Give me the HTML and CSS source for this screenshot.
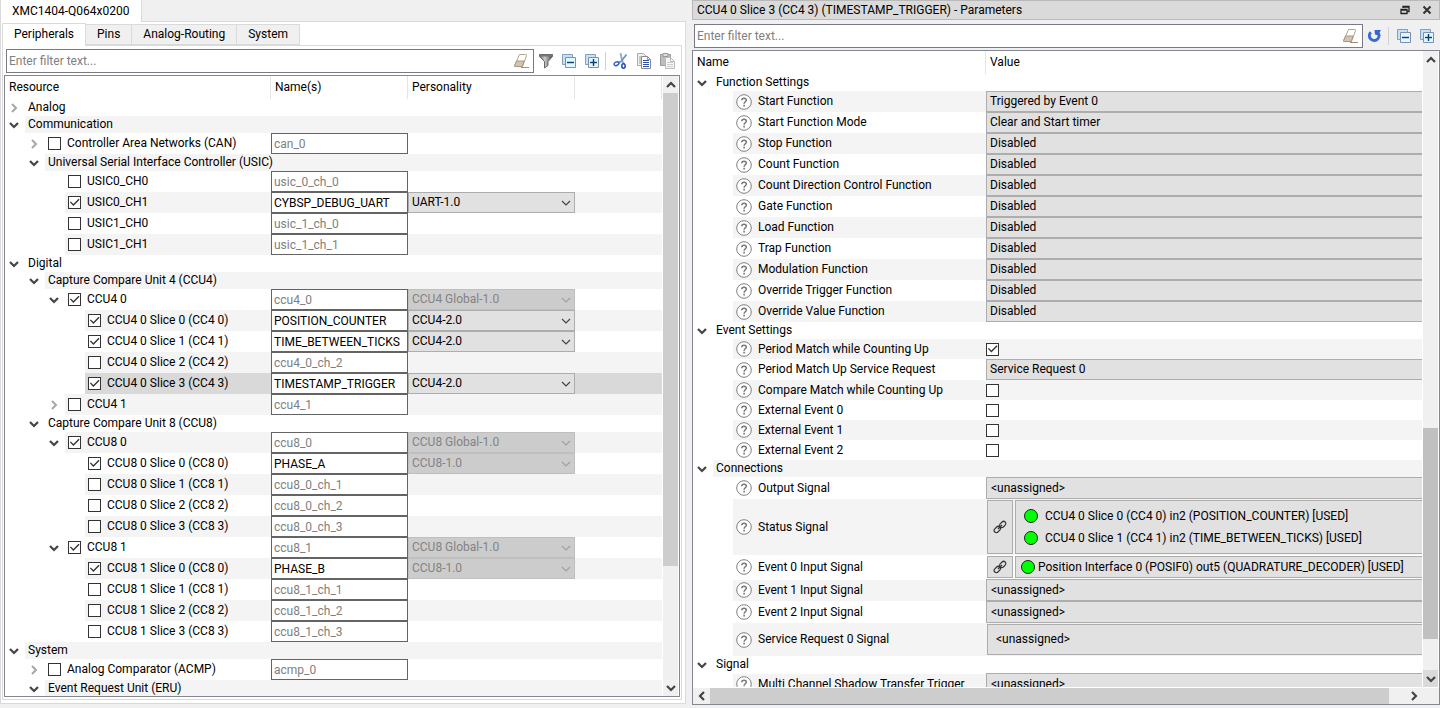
FILE: index.html
```html
<!DOCTYPE html>
<html lang="en">
<head>
<meta charset="utf-8">
<title>Device Configurator</title>
<link rel="stylesheet" href="styles.css">
</head>
<body>
<svg class="sprite" aria-hidden="true">
  <symbol id="down" viewBox="0 0 10 8"><path d="M1 2 5 6 9 2" fill="none" stroke="#444" stroke-width="2.200"/></symbol>
  <symbol id="right" viewBox="0 0 8 10"><path d="M2 1 6 5 2 9" fill="none" stroke="#a6a6a6" stroke-width="2"/></symbol>
  <symbol id="thin" viewBox="0 0 10 8"><path d="M1 2 5 6 9 2" fill="none" stroke="currentColor" stroke-width="1.2"/></symbol>
  <symbol id="help" viewBox="0 0 16 16"><circle cx="8" cy="8" r="7.3" fill="#fff" stroke="#808080"/><path d="M5.8 6.3C5.8 3.6 10.3 3.7 10.3 6.2 10.3 7.8 8.1 7.8 8.1 9.8" fill="none" stroke="#777" stroke-width="1.5"/><path d="M7.3 10.8h1.6v1.6H7.3z" fill="#777"/></symbol>
  <symbol id="link" viewBox="0 0 14 14"><g fill="none" stroke="#333" stroke-width="1.2"><rect x="6.2" y="2.3" width="7" height="4.4" rx="2.2" transform="rotate(-45 9.7 4.5)"/><rect x=".8" y="7.3" width="7" height="4.4" rx="2.2" transform="rotate(-45 4.3 9.5)"/><path d="M5 9 9 5"/></g></symbol>
  <symbol id="eraser" viewBox="0 0 16 16"><path d="M6.5 1.5h6.3q1.2 0 .7 1.2L9.500 13.500H2.200q-1 0-.5-1.200z" fill="#fff" stroke="#b5a48d"/><path d="M3.700 8h7.500L9.200 13.500H2.200q-1 0-.5-1.200z" fill="#d3c4b4" stroke="#a8967e"/><path d="M8 14.500h8" stroke="#a08c70"/></symbol>
  <symbol id="collapse" viewBox="0 0 16 16"><path d="M1.500 1.500h10v10h-10z" fill="#c9e1f5" stroke="#82a0c0"/><path d="M4.500 4.500h10v10h-10z" fill="#e4f6ff" stroke="#7b8fb4"/><path d="M6 9.500h7" stroke="#05406f" stroke-width="1.400"/></symbol>
  <symbol id="expand" viewBox="0 0 16 16"><use href="#collapse"/><path d="M9.500 6v7" stroke="#05406f" stroke-width="1.400"/></symbol>
</svg>

<div class="workspace">
<main class="device">
  <div class="device-tabs" role="tablist"><button class="device-tab" role="tab" aria-selected="true">XMC1404-Q064x0200</button></div>
  <div class="device-body">
    <div class="tabs" role="tablist">
      <button class="tab active" role="tab" aria-selected="true">Peripherals</button><button class="tab" role="tab">Pins</button><button class="tab" role="tab">Analog-Routing</button><button class="tab" role="tab">System</button>
    </div>
    <div class="pane">
      <div class="toolbar">
        <div class="filter"><input type="text" placeholder="Enter filter text..." aria-label="Filter resources"><button class="tool" aria-label="Clear"><svg><use href="#eraser"/></svg></button></div>
        <button class="tool" aria-label="Filter"><svg viewBox="0 0 16 16"><defs><linearGradient id="fun"><stop offset="0" stop-color="#666"/><stop offset=".4" stop-color="#ccc"/><stop offset="1" stop-color="#444"/></linearGradient></defs><path d="M1.500 1.500h13v2L10 8.500v4L6.500 15V8.500L1.500 3.500z" fill="url(#fun)" stroke="#666"/><path d="M1.500 2.500h13" stroke="#777" stroke-width="2"/></svg></button>
        <button class="tool" aria-label="Collapse all"><svg><use href="#collapse"/></svg></button>
        <button class="tool" aria-label="Expand all"><svg><use href="#expand"/></svg></button>
        <span class="sep"></span>
        <button class="tool" aria-label="Cut"><svg viewBox="0 0 16 16"><path d="M7.500 0 9 7.500 11 11" fill="none" stroke="#8aaccc" stroke-width="1.800"/><path d="M13.500 1.500 8 8.500 5 10" fill="none" stroke="#6c97c4" stroke-width="1.800"/><ellipse cx="3.500" cy="10.700" rx="2.500" ry="1.700" fill="none" stroke="#2f62c0" stroke-width="1.500" transform="rotate(-25 3.500 10.700)"/><ellipse cx="10.500" cy="13" rx="1.700" ry="2.200" fill="none" stroke="#2149b0" stroke-width="1.500"/></svg></button>
        <button class="tool" aria-label="Copy"><svg viewBox="0 0 16 16"><path d="M1.500.5h6l3 3v9h-9z" fill="#f3f3f3" stroke="#aaa"/><path d="M3 4h2M3 6h2M3 8h2M3 10h2" stroke="#999"/><path d="M5.500 3.500h6l3 3v9h-9z" fill="#fff" stroke="#888"/><path d="M11.500 3.500v3h3" fill="none" stroke="#999"/><path d="M7 7.500h6M7 9.500h6M7 11.500h6M7 13.500h6" stroke="#2c50a8"/></svg></button>
        <button class="tool" aria-label="Paste"><svg viewBox="0 0 16 16"><path d="M1.500 1.500h10v11h-10z" fill="#bdbdbd" stroke="#999"/><path d="M4 .5h5v3H4z" fill="#ddd" stroke="#999"/><path d="M6.500 4.500h5l4 4v7h-9z" fill="#f6f6f6" stroke="#bbb"/><path d="M11.500 4.500v4h4" fill="none" stroke="#bbb"/><path d="M8 9.500h6M8 11.500h6M8 13.500h6" stroke="#ccc"/></svg></button>
      </div>
      <div class="list">
        <div class="view">
        <table class="grid resources">
          <colgroup><col class="c-res"><col class="c-name"><col class="c-pers"><col></colgroup>
          <thead><tr><th>Resource</th><th>Name(s)</th><th>Personality</th><th></th></tr></thead>
          <tbody>
          <tr><td><div class="node l0"><span class="tg"><svg class="r"><use href="#right"/></svg></span><span class="lb">Analog</span></div></td><td></td><td></td><td></td></tr>
          <tr><td><div class="node l0"><span class="tg"><svg><use href="#down"/></svg></span><span class="lb">Communication</span></div></td><td></td><td></td><td></td></tr>
          <tr><td><div class="node l1"><span class="tg"><svg class="r"><use href="#right"/></svg></span><label class="lb"><input type="checkbox">Controller Area Networks (CAN)</label></div></td><td><input class="name" placeholder="can_0" aria-label="Name"></td><td></td><td></td></tr>
          <tr><td><div class="node l1"><span class="tg"><svg><use href="#down"/></svg></span><span class="lb">Universal Serial Interface Controller (USIC)</span></div></td><td></td><td></td><td></td></tr>
          <tr><td><div class="node l2"><label class="lb"><input type="checkbox">USIC0_CH0</label></div></td><td><input class="name" placeholder="usic_0_ch_0" aria-label="Name"></td><td></td><td></td></tr>
          <tr><td><div class="node l2"><label class="lb"><input type="checkbox" checked>USIC0_CH1</label></div></td><td><input class="name" value="CYBSP_DEBUG_UART" aria-label="Name"></td><td><div class="combo"><select aria-label="Personality"><option>UART-1.0</option></select><svg><use href="#thin"/></svg></div></td><td></td></tr>
          <tr><td><div class="node l2"><label class="lb"><input type="checkbox">USIC1_CH0</label></div></td><td><input class="name" placeholder="usic_1_ch_0" aria-label="Name"></td><td></td><td></td></tr>
          <tr><td><div class="node l2"><label class="lb"><input type="checkbox">USIC1_CH1</label></div></td><td><input class="name" placeholder="usic_1_ch_1" aria-label="Name"></td><td></td><td></td></tr>
          <tr><td><div class="node l0"><span class="tg"><svg><use href="#down"/></svg></span><span class="lb">Digital</span></div></td><td></td><td></td><td></td></tr>
          <tr><td><div class="node l1"><span class="tg"><svg><use href="#down"/></svg></span><span class="lb">Capture Compare Unit 4 (CCU4)</span></div></td><td></td><td></td><td></td></tr>
          <tr><td><div class="node l2"><span class="tg"><svg><use href="#down"/></svg></span><label class="lb"><input type="checkbox" checked>CCU4 0</label></div></td><td><input class="name" placeholder="ccu4_0" aria-label="Name"></td><td><div class="combo"><select disabled aria-label="Personality"><option>CCU4 Global-1.0</option></select><svg><use href="#thin"/></svg></div></td><td></td></tr>
          <tr><td><div class="node l3"><label class="lb"><input type="checkbox" checked>CCU4 0 Slice 0 (CC4 0)</label></div></td><td><input class="name" value="POSITION_COUNTER" aria-label="Name"></td><td><div class="combo"><select aria-label="Personality"><option>CCU4-2.0</option></select><svg><use href="#thin"/></svg></div></td><td></td></tr>
          <tr><td><div class="node l3"><label class="lb"><input type="checkbox" checked>CCU4 0 Slice 1 (CC4 1)</label></div></td><td><input class="name" value="TIME_BETWEEN_TICKS" aria-label="Name"></td><td><div class="combo"><select aria-label="Personality"><option>CCU4-2.0</option></select><svg><use href="#thin"/></svg></div></td><td></td></tr>
          <tr><td><div class="node l3"><label class="lb"><input type="checkbox">CCU4 0 Slice 2 (CC4 2)</label></div></td><td><input class="name" placeholder="ccu4_0_ch_2" aria-label="Name"></td><td></td><td></td></tr>
          <tr class="selected"><td><div class="node l3"><label class="lb"><input type="checkbox" checked>CCU4 0 Slice 3 (CC4 3)</label></div></td><td><input class="name" value="TIMESTAMP_TRIGGER" aria-label="Name"></td><td><div class="combo"><select aria-label="Personality"><option>CCU4-2.0</option></select><svg><use href="#thin"/></svg></div></td><td></td></tr>
          <tr><td><div class="node l2"><span class="tg"><svg class="r"><use href="#right"/></svg></span><label class="lb"><input type="checkbox">CCU4 1</label></div></td><td><input class="name" placeholder="ccu4_1" aria-label="Name"></td><td></td><td></td></tr>
          <tr><td><div class="node l1"><span class="tg"><svg><use href="#down"/></svg></span><span class="lb">Capture Compare Unit 8 (CCU8)</span></div></td><td></td><td></td><td></td></tr>
          <tr><td><div class="node l2"><span class="tg"><svg><use href="#down"/></svg></span><label class="lb"><input type="checkbox" checked>CCU8 0</label></div></td><td><input class="name" placeholder="ccu8_0" aria-label="Name"></td><td><div class="combo"><select disabled aria-label="Personality"><option>CCU8 Global-1.0</option></select><svg><use href="#thin"/></svg></div></td><td></td></tr>
          <tr><td><div class="node l3"><label class="lb"><input type="checkbox" checked>CCU8 0 Slice 0 (CC8 0)</label></div></td><td><input class="name" value="PHASE_A" aria-label="Name"></td><td><div class="combo"><select disabled aria-label="Personality"><option>CCU8-1.0</option></select><svg><use href="#thin"/></svg></div></td><td></td></tr>
          <tr><td><div class="node l3"><label class="lb"><input type="checkbox">CCU8 0 Slice 1 (CC8 1)</label></div></td><td><input class="name" placeholder="ccu8_0_ch_1" aria-label="Name"></td><td></td><td></td></tr>
          <tr><td><div class="node l3"><label class="lb"><input type="checkbox">CCU8 0 Slice 2 (CC8 2)</label></div></td><td><input class="name" placeholder="ccu8_0_ch_2" aria-label="Name"></td><td></td><td></td></tr>
          <tr><td><div class="node l3"><label class="lb"><input type="checkbox">CCU8 0 Slice 3 (CC8 3)</label></div></td><td><input class="name" placeholder="ccu8_0_ch_3" aria-label="Name"></td><td></td><td></td></tr>
          <tr><td><div class="node l2"><span class="tg"><svg><use href="#down"/></svg></span><label class="lb"><input type="checkbox" checked>CCU8 1</label></div></td><td><input class="name" placeholder="ccu8_1" aria-label="Name"></td><td><div class="combo"><select disabled aria-label="Personality"><option>CCU8 Global-1.0</option></select><svg><use href="#thin"/></svg></div></td><td></td></tr>
          <tr><td><div class="node l3"><label class="lb"><input type="checkbox" checked>CCU8 1 Slice 0 (CC8 0)</label></div></td><td><input class="name" value="PHASE_B" aria-label="Name"></td><td><div class="combo"><select disabled aria-label="Personality"><option>CCU8-1.0</option></select><svg><use href="#thin"/></svg></div></td><td></td></tr>
          <tr><td><div class="node l3"><label class="lb"><input type="checkbox">CCU8 1 Slice 1 (CC8 1)</label></div></td><td><input class="name" placeholder="ccu8_1_ch_1" aria-label="Name"></td><td></td><td></td></tr>
          <tr><td><div class="node l3"><label class="lb"><input type="checkbox">CCU8 1 Slice 2 (CC8 2)</label></div></td><td><input class="name" placeholder="ccu8_1_ch_2" aria-label="Name"></td><td></td><td></td></tr>
          <tr><td><div class="node l3"><label class="lb"><input type="checkbox">CCU8 1 Slice 3 (CC8 3)</label></div></td><td><input class="name" placeholder="ccu8_1_ch_3" aria-label="Name"></td><td></td><td></td></tr>
          <tr><td><div class="node l0"><span class="tg"><svg><use href="#down"/></svg></span><span class="lb">System</span></div></td><td></td><td></td><td></td></tr>
          <tr><td><div class="node l1"><span class="tg"><svg class="r"><use href="#right"/></svg></span><label class="lb"><input type="checkbox">Analog Comparator (ACMP)</label></div></td><td><input class="name" placeholder="acmp_0" aria-label="Name"></td><td></td><td></td></tr>
          <tr><td><div class="node l1"><span class="tg"><svg><use href="#down"/></svg></span><span class="lb">Event Request Unit (ERU)</span></div></td><td></td><td></td><td></td></tr>
          </tbody>
        </table>
        </div>
        <div class="vbar left-bar"><span class="arrow up"><svg><use href="#down"/></svg></span><span class="track"><span class="before"></span><span class="thumb"></span><span class="after"></span></span><span class="arrow"><svg><use href="#down"/></svg></span></div>
      </div>
    </div>
  </div>
</main>

<aside class="params">
  <header class="title"><h1>CCU4 0 Slice 3 (CC4 3) (TIMESTAMP_TRIGGER) - Parameters</h1>
    <button class="win" aria-label="Float"><svg viewBox="0 0 10 10"><path d="M3 3V1.500h6v5H7M3 2h6" fill="none" stroke="#222" stroke-width="1.300"/><path d="M1 4.500h6v4H1zM1 5h6" fill="none" stroke="#222" stroke-width="1.300"/></svg></button>
    <button class="win" aria-label="Close"><svg viewBox="0 0 10 10"><path d="M1.500 1.500 8.500 8.500M8.500 1.500 1.500 8.500" stroke="#333" stroke-width="2"/></svg></button>
  </header>
  <div class="toolbar">
    <div class="filter"><input type="text" placeholder="Enter filter text..." aria-label="Filter parameters"><button class="tool" aria-label="Clear"><svg><use href="#eraser"/></svg></button></div>
    <button class="tool" aria-label="Reset"><svg viewBox="0 0 16 16"><path d="M3.800 4.200A4.800 4.800 0 1 0 11.500 5.500" fill="none" stroke="#3969d2" stroke-width="3"/><path d="M7.500 2H14L12 5.500 13.500 8 8 6.500z" fill="#3565cf"/></svg></button>
    <span class="sep"></span>
    <button class="tool" aria-label="Collapse all"><svg><use href="#collapse"/></svg></button>
    <button class="tool" aria-label="Expand all"><svg><use href="#expand"/></svg></button>
  </div>
  <div class="list">
    <div class="scroller">
      <div class="view">
      <table class="grid values">
        <colgroup><col class="c-param"><col></colgroup>
        <thead><tr><th>Name</th><th>Value</th></tr></thead>
        <tbody>
        <tr><td><div class="node l0"><span class="tg"><svg><use href="#down"/></svg></span><span class="lb">Function Settings</span></div></td><td></td></tr>
        <tr><td><div class="node p"><span class="lb"><svg class="help"><use href="#help"/></svg>Start Function</span></div></td><td><select class="val" aria-label="Start Function"><option>Triggered by Event 0</option></select></td></tr>
        <tr><td><div class="node p"><span class="lb"><svg class="help"><use href="#help"/></svg>Start Function Mode</span></div></td><td><select class="val" aria-label="Start Function Mode"><option>Clear and Start timer</option></select></td></tr>
        <tr><td><div class="node p"><span class="lb"><svg class="help"><use href="#help"/></svg>Stop Function</span></div></td><td><select class="val" aria-label="Stop Function"><option>Disabled</option></select></td></tr>
        <tr><td><div class="node p"><span class="lb"><svg class="help"><use href="#help"/></svg>Count Function</span></div></td><td><select class="val" aria-label="Count Function"><option>Disabled</option></select></td></tr>
        <tr><td><div class="node p"><span class="lb"><svg class="help"><use href="#help"/></svg>Count Direction Control Function</span></div></td><td><select class="val" aria-label="Count Direction Control Function"><option>Disabled</option></select></td></tr>
        <tr><td><div class="node p"><span class="lb"><svg class="help"><use href="#help"/></svg>Gate Function</span></div></td><td><select class="val" aria-label="Gate Function"><option>Disabled</option></select></td></tr>
        <tr><td><div class="node p"><span class="lb"><svg class="help"><use href="#help"/></svg>Load Function</span></div></td><td><select class="val" aria-label="Load Function"><option>Disabled</option></select></td></tr>
        <tr><td><div class="node p"><span class="lb"><svg class="help"><use href="#help"/></svg>Trap Function</span></div></td><td><select class="val" aria-label="Trap Function"><option>Disabled</option></select></td></tr>
        <tr><td><div class="node p"><span class="lb"><svg class="help"><use href="#help"/></svg>Modulation Function</span></div></td><td><select class="val" aria-label="Modulation Function"><option>Disabled</option></select></td></tr>
        <tr><td><div class="node p"><span class="lb"><svg class="help"><use href="#help"/></svg>Override Trigger Function</span></div></td><td><select class="val" aria-label="Override Trigger Function"><option>Disabled</option></select></td></tr>
        <tr><td><div class="node p"><span class="lb"><svg class="help"><use href="#help"/></svg>Override Value Function</span></div></td><td><select class="val" aria-label="Override Value Function"><option>Disabled</option></select></td></tr>
        <tr><td><div class="node l0"><span class="tg"><svg><use href="#down"/></svg></span><span class="lb">Event Settings</span></div></td><td></td></tr>
        <tr class="check"><td><div class="node p"><label class="lb" for="e1"><svg class="help"><use href="#help"/></svg>Period Match while Counting Up</label></div></td><td><input type="checkbox" id="e1" checked></td></tr>
        <tr><td><div class="node p"><span class="lb"><svg class="help"><use href="#help"/></svg>Period Match Up Service Request</span></div></td><td><select class="val" aria-label="Period Match Up Service Request"><option>Service Request 0</option></select></td></tr>
        <tr class="check"><td><div class="node p"><label class="lb" for="e2"><svg class="help"><use href="#help"/></svg>Compare Match while Counting Up</label></div></td><td><input type="checkbox" id="e2"></td></tr>
        <tr class="check"><td><div class="node p"><label class="lb" for="e3"><svg class="help"><use href="#help"/></svg>External Event 0</label></div></td><td><input type="checkbox" id="e3"></td></tr>
        <tr class="check"><td><div class="node p"><label class="lb" for="e4"><svg class="help"><use href="#help"/></svg>External Event 1</label></div></td><td><input type="checkbox" id="e4"></td></tr>
        <tr class="check"><td><div class="node p"><label class="lb" for="e5"><svg class="help"><use href="#help"/></svg>External Event 2</label></div></td><td><input type="checkbox" id="e5"></td></tr>
        <tr><td><div class="node l0"><span class="tg"><svg><use href="#down"/></svg></span><span class="lb">Connections</span></div></td><td></td></tr>
        <tr class="sig"><td><div class="node p"><span class="lb"><svg class="help"><use href="#help"/></svg>Output Signal</span></div></td><td><button class="val">&lt;unassigned&gt;</button></td></tr>
        <tr class="multi"><td><div class="node p"><span class="lb"><svg class="help"><use href="#help"/></svg>Status Signal</span></div></td><td><div class="route"><button class="jump" aria-label="Go to signal"><svg><use href="#link"/></svg></button><button class="target two"><span class="dot"></span><span>CCU4 0 Slice 0 (CC4 0) in2 (POSITION_COUNTER) [USED]</span><span class="dot"></span><span>CCU4 0 Slice 1 (CC4 1) in2 (TIME_BETWEEN_TICKS) [USED]</span></button></div></td></tr>
        <tr class="single"><td><div class="node p"><span class="lb"><svg class="help"><use href="#help"/></svg>Event 0 Input Signal</span></div></td><td><div class="route"><button class="jump" aria-label="Go to signal"><svg><use href="#link"/></svg></button><button class="target"><span class="dot"></span><span>Position Interface 0 (POSIF0) out5 (QUADRATURE_DECODER) [USED]</span></button></div></td></tr>
        <tr class="sig"><td><div class="node p"><span class="lb"><svg class="help"><use href="#help"/></svg>Event 1 Input Signal</span></div></td><td><button class="val">&lt;unassigned&gt;</button></td></tr>
        <tr class="sig"><td><div class="node p"><span class="lb"><svg class="help"><use href="#help"/></svg>Event 2 Input Signal</span></div></td><td><button class="val">&lt;unassigned&gt;</button></td></tr>
        <tr class="service"><td><div class="node p"><span class="lb"><svg class="help"><use href="#help"/></svg>Service Request 0 Signal</span></div></td><td><div class="route"><button class="target">&lt;unassigned&gt;</button></div></td></tr>
        <tr><td><div class="node l0"><span class="tg"><svg><use href="#down"/></svg></span><span class="lb">Signal</span></div></td><td></td></tr>
        <tr class="sig"><td><div class="node p"><span class="lb"><svg class="help"><use href="#help"/></svg>Multi Channel Shadow Transfer Trigger</span></div></td><td><button class="val">&lt;unassigned&gt;</button></td></tr>
        </tbody>
      </table>
      </div>
      <div class="vbar right-bar"><span class="arrow up"><svg><use href="#down"/></svg></span><span class="track"><span class="before"></span><span class="thumb"></span><span class="after"></span></span><span class="arrow hot"><svg><use href="#down"/></svg></span></div>
    </div>
    <div class="hbar"><span class="arrow toleft"><svg><use href="#down"/></svg></span><span class="thumb"></span><span class="arrow toright"><svg><use href="#down"/></svg></span></div>
  </div>
</aside>
</div>
</body>
</html>
```
FILE: styles.css
```css
* { box-sizing: border-box; }

body, button, input, select {
  font-family: Roboto, "Noto Sans", sans-serif;
  font-size: 12px;
  line-height: 17px;
  color: #000;
}

body { margin: 0; background: #f0f0f0; }
button, input, select { margin: 0; padding: 0; border: 0; border-radius: 0; background: none; }
svg { display: block; flex: none; }
.sprite { position: absolute; width: 0; height: 0; }
input::placeholder { color: #808080; opacity: 1; }

.workspace {
  display: grid;
  grid-template-columns: 686fr 748fr;
  gap: 6px;
  height: 100vh;
  padding-bottom: 3px;
}

/* device panel */
.device { display: flex; flex-direction: column; min-width: 0; min-height: 0; padding-bottom: 1px; }
.device-tabs { display: flex; z-index: 1; }
.device-tab {
  height: 22px;
  margin-bottom: -1px;
  padding: 0 11px;
  background: #fff;
  border: 1px solid #dadada;
  border-width: 0 1px;
}
.device-body {
  flex: 1;
  display: flex;
  flex-direction: column;
  min-height: 0;
  padding: 1px 3px 3px 1px;
  background: #fff;
  border: 1px solid #dadada;
}
.tabs { display: flex; align-items: flex-end; z-index: 1; }
.tab {
  height: 21px;
  padding: 0 11px;
  background: #f0f0f0;
  border: 1px solid #dadada;
  border-left-width: 0;
}
.tab.active {
  height: 23px;
  margin-bottom: -1px;
  padding: 0 11px 2px;
  background: #fff;
  border-width: 1px 1px 0 1px;
}
.pane {
  flex: 1;
  display: flex;
  flex-direction: column;
  min-height: 0;
  padding: 3px 1px 2px;
  border: 1px solid #dadada;
}

.toolbar { display: flex; align-items: center; gap: 7px; padding: 0 5px 2px 2px; }
.filter {
  flex: 1;
  display: flex;
  align-items: center;
  height: 24px;
  padding: 0 4px 0 2px;
  margin-right: -3px;
  background: #fff;
  border: 1px solid #7a7a85;
}
.filter input { flex: 1; min-width: 0; outline: 0; }
.tool, .tool svg { width: 16px; height: 16px; }
.sep { width: 1px; height: 18px; margin-left: -2px; background: #d0d0d0; }

.list {
  flex: 1;
  display: flex;
  min-height: 0;
  background: #fff;
  border: 1px solid #828790;
}
.view { flex: 1; min-width: 0; min-height: 0; overflow: hidden; }

/* tree tables */
.grid { width: 100%; border-collapse: separate; border-spacing: 0; table-layout: fixed; }
.c-res { width: 266px; }
.c-name { width: 137px; }
.c-pers { width: 167px; }
.c-param { width: 293px; }
.grid th {
  height: 23px;
  padding: 0 4px;
  text-align: left;
  font-weight: 400;
  border-right: 1px solid #e5e5e5;
}
.values th:last-child { border-right: 0; }
.grid td { height: 17px; padding: 0; }
.grid tbody tr:nth-child(even) td:not(:first-child),
.grid tbody tr:nth-child(even) .lb { background: #f4f4f4; }
.grid tbody tr.selected td:not(:first-child), .grid tbody tr.selected .lb { background: #d9d9d9; }

.node { display: flex; height: 17px; }
tr:has(.name) .node, tr:has(.val) .node { height: 21px; }
.tg { display: flex; align-items: center; justify-content: center; flex: none; width: 20px; padding-right: 2px; }
.tg svg { width: 10px; height: 8px; }
.tg svg.r { width: 8px; height: 10px; }
.l1 { padding-left: 20px; }
.l2 { padding-left: 40px; }
.l2:not(:has(.tg)) { padding-left: 60px; }
.l3 { padding-left: 80px; }
.p { padding-left: 40px; }
.lb { flex: 1; display: flex; align-items: center; padding-left: 3px; white-space: nowrap; }
.lb input { margin-right: 6px; }
.help { width: 16px; height: 16px; margin-right: 6px; }

input[type="checkbox"] {
  appearance: none;
  display: grid;
  flex: none;
  width: 13px;
  height: 13px;
  background: #fff;
  border: 1px solid #333;
}
input[type="checkbox"]:checked::before {
  content: "";
  background: #333;
  clip-path: polygon(8% 48%, 17% 40%, 40% 63%, 87% 16%, 96% 25%, 40% 81%);
}

.name {
  display: block;
  width: 100%;
  height: 21px;
  padding: 0 2px;
  background: #fff;
  border: 1px solid #646464;
}
.combo { display: grid; align-items: center; }
.combo select, .combo svg { grid-area: 1 / 1; }
.combo select, .val {
  appearance: none;
  display: block;
  width: 100%;
  height: 21px;
  padding-left: 3px;
  text-align: left;
  background: #e1e1e1;
  border: 1px solid #adadad;
}
.combo select:disabled { color: #838383; background: #ccc; border-color: #bfbfbf; opacity: 1; }
.combo svg { justify-self: end; width: 10px; height: 8px; margin-right: 4px; color: #444; pointer-events: none; }
.combo select:disabled + svg { color: #a0a0a0; }

/* scroll bars */
.vbar { display: flex; flex-direction: column; width: 17px; background: #f0f0f0; border: 1px solid #fff; border-width: 0 1px; }
.arrow { display: flex; align-items: center; justify-content: center; flex: none; height: 17px; }
.arrow svg { width: 10px; height: 8px; }
.up svg { transform: rotate(180deg); }
.hot { background: #dadada; }
.track { flex: 1; display: flex; flex-direction: column; }
.thumb { background: #cdcdcd; }
.left-bar .thumb { flex: 473; }
.left-bar .after { flex: 113; }
.right-bar .before { flex: 360; }
.right-bar .thumb { flex: 211; background: #c0c0c0; }
.right-bar .after { flex: 31; }

/* parameters panel */
.params { display: flex; flex-direction: column; min-width: 0; min-height: 0; }
.title {
  display: flex;
  align-items: center;
  gap: 10px;
  height: 20px;
  padding: 0 6px 0 4px;
  background: #dadada;
  border: 1px solid #b9b9b9;
}
.title h1 { flex: 1; margin: 0; font-size: 12px; font-weight: 400; }
.win { padding: 0 1px; }
.win svg { width: 10px; height: 10px; }
.params .toolbar { padding: 4px 5px 2px 2px; }
.params .list { flex-direction: column; }
.scroller { flex: 1; display: flex; min-height: 0; }
.val { border-right: 0; }
.check .node { height: 20px; }
.sig .node, .sig .val { height: 22px; }
.sig .val { padding-left: 4px; }
tr.multi .node { height: 56px; }
tr.single .node { height: 24px; }
tr.service .node { height: 33px; }
.route { display: flex; gap: 2px; padding: 1px 0 1px 1px; }
.jump { display: flex; align-items: center; justify-content: center; width: 26px; background: #e1e1e1; border: 1px solid #adadad; }
.jump svg { width: 14px; height: 14px; }
.target {
  flex: 1;
  display: flex;
  align-items: center;
  gap: 3px;
  height: 22px;
  padding-left: 5px;
  white-space: nowrap;
  background: #e1e1e1;
  border: 1px solid #adadad;
  border-right: 0;
}
.two { display: grid; grid-template-columns: 14px 1fr; align-content: center; gap: 5px 7px; height: 54px; padding-left: 8px; text-align: left; }
.service .target { height: 31px; padding-left: 8px; }
.dot { flex: none; width: 14px; height: 14px; background: #0f0; border: 1px solid #222; border-radius: 50%; }

.hbar { display: flex; height: 17px; background: #f0f0f0; border-top: 1px solid #fff; }
.hbar .arrow { width: 17px; height: 16px; }
.hbar .thumb { flex: 1; }
.toleft svg { transform: rotate(90deg); }
.hbar .toright { width: 50px; }
.toright svg { transform: rotate(-90deg); }
```
